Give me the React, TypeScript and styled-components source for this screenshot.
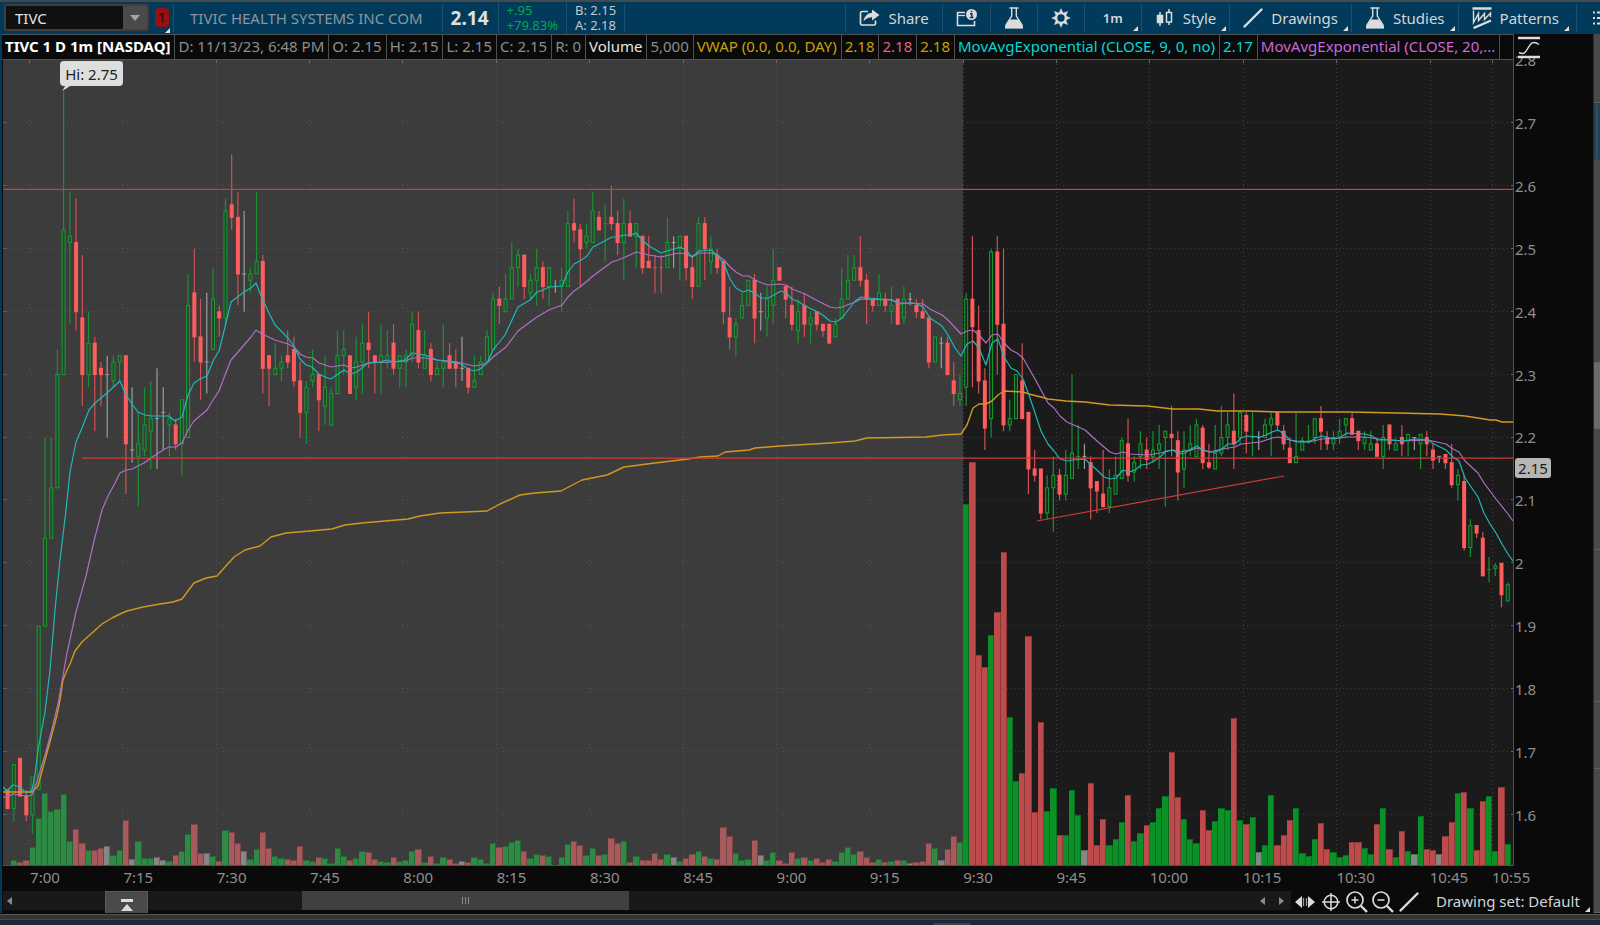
import React from 'react';
import styled, { createGlobalStyle, css } from 'styled-components';

/* ---------- palette ---------- */
const c = {
  toolbar: '#013a5b',
  toolbarLine: '#1f4f6d',
  ink: '#d3d6d8',
  black: '#0a0a0a',
  axisText: '#8e8e8e',
  edge: '#505050',
  cyan: '#1fb8b8',
  purple: '#b06fc4',
  gold: '#d0991f',
};

const GlobalStyle = createGlobalStyle`
  * { box-sizing: border-box; }
  html, body { margin: 0; padding: 0; background: #202634; }
  body { font-family: "Noto Sans", "Open Sans", sans-serif; font-size: 15px; color: ${c.ink}; }
  button, input { font: inherit; color: inherit; }
`;

/* ---------- market data ----------
   One candle per minute: kind(g up / r down / n unchanged), high, body top,
   body bottom, low (in cents), volume. Each row is a quarter of an hour. */
const SESSION: string[] = [
  // 6:56
  'r 164 164 161 161 0;g 168 168 161 159 5;r 169 169 163 163 3;r 164 163 160 159 5',
  // 7:00
  'g 166 166 160 157 18;g 190 190 164 164 47;g 220 204 190 190 72;g 220 212 204 204 54;g 234 230 212 212 56;g 275 253 230 230 71;g 259 252 251 238 24;r 258 251 240 237 36;r 249 239 230 225 22;g 240 235 230 228 15;r 236 235 230 221 15;r 232 231 230 225 17;n 233 230 230 220 19;g 233 232 229 228 10;g 233 233 232 229 15',
  // 7:15
  'r 233 233 219 211 45;n 228 218 218 216 6;g 224 219 217 209 24;g 228 222 218 217 7;g 229 223 221 215 7;n 231 223 223 215 8;n 228 224 224 218 5;g 224 223 222 217 4;r 223 222 219 218 10;g 226 226 219 214 14;g 246 241 220 220 31;r 250 243 236 232 41;r 242 236 232 226 12;n 243 232 232 227 12;g 247 242 234 234 9',
  // 7:30
  'r 241 240 239 236 4;g 258 256 239 238 35;r 265 257 255 253 33;r 259 255 246 241 22;n 256 246 246 240 14;g 247 246 245 243 6;g 259 248 246 246 16;r 249 248 231 227 33;r 233 233 231 225 17;g 235 231 230 230 9;g 233 232 231 229 7;r 237 233 232 231 6;r 236 234 229 228 5;r 232 229 224 220 19;g 229 228 224 219 5',
  // 7:45
  'g 234 230 229 228 4;r 230 230 226 221 8;g 233 228 225 222 7;g 228 227 222 222 2;g 237 233 227 227 17;g 237 234 233 230 9;r 233 233 227 227 5;g 236 232 228 226 7;g 238 235 232 227 14;r 240 235 234 231 13;r 233 233 232 227 6;g 238 233 232 227 4;g 237 233 232 231 3;r 238 235 231 230 8;g 233 233 231 228 4',
  // 8:00
  'g 234 233 232 228 5;g 240 238 233 232 14;r 240 237 232 231 16;g 237 233 231 231 3;r 235 234 230 229 9;g 232 231 230 230 2;g 238 232 231 228 8;r 235 233 231 231 6;r 234 232 231 228 2;n 236 231 231 229 4;r 231 231 228 227 3;g 233 229 228 228 8;g 233 232 230 230 6;g 237 236 232 232 2;g 243 242 234 234 22',
  // 8:15
  'r 244 242 241 238 18;g 246 242 240 240 19;g 251 247 242 242 23;g 250 249 247 244 25;r 249 249 244 242 14;g 246 245 243 242 7;g 250 247 245 241 11;r 248 247 244 242 10;g 247 247 244 241 9;n 245 244 244 243 0;g 247 245 244 240 8;g 256 254 244 244 21;r 258 254 253 251 24;r 254 253 250 244 20;g 254 252 251 250 10',
  // 8:30
  'g 259 256 251 251 17;r 256 255 253 253 10;g 257 254 254 248 11;r 260 255 254 253 27;r 256 254 251 249 22;g 258 254 251 245 24;r 256 254 252 252 3;g 254 254 252 247 9;r 252 252 247 246 5;r 252 248 247 247 5;r 249 247 247 243 12;r 249 247 247 243 6;g 255 251 247 247 11;n 252 251 251 247 8;g 252 252 250 245 4',
  // 8:45
  'r 252 252 247 245 7;r 249 247 244 242 11;g 255 254 244 244 14;r 255 254 250 245 9;g 252 250 248 246 7;r 250 249 247 246 6;r 248 248 240 238 38;r 244 239 236 234 29;g 239 238 236 233 12;g 243 241 239 239 5;g 245 245 241 241 6;r 246 245 239 235 25;n 243 240 240 237 10;g 244 242 239 236 5;g 250 245 241 238 13',
  // 9:00
  'r 247 247 245 245 5;r 244 244 242 239 2;r 244 241 238 237 13;g 242 240 237 235 7;r 243 241 238 236 8;g 240 239 238 235 5;r 240 240 238 237 7;r 238 238 237 236 3;r 238 238 235 235 6;g 239 238 236 236 4;g 247 242 239 239 13;g 249 245 242 242 18;g 249 247 245 245 11;r 252 247 245 244 14;r 246 245 242 238 8',
  // 9:15
  'r 242 242 241 240 3;g 246 243 241 241 6;r 243 242 241 240 3;g 244 241 240 238 4;r 242 242 238 238 5;g 244 242 239 238 5;n 243 242 242 241 2;r 242 241 240 239 3;r 242 240 239 239 4;r 239 239 232 231 22;g 236 236 232 232 17;n 236 235 235 231 5;r 236 235 230 230 16;r 232 229 227 225 29;g 230 227 226 225 23',
  // 9:30
  'g 243 242 228 225 361;r 252 242 237.6 228 403;r 241 237 229 227 210;r 231 229 221.5 218 198;g 250 249.5 223 220 230;r 252 249.5 238 230 253;r 250 238 222 221 313;g 226 223 222 221 148;g 230 230 223 223 84;r 235 229 223 223 92;r 224 224 215 211 229;r 218 215 214 213 53;r 215 215 208 207 143;g 214 212 208 207 54;g 217 214 212 205 77',
  // 9:45
  'r 215 214 211 210 30;g 218 214 211 210 30;g 230 217.5 213.5 213.5 75;g 222 217 217 215 50;n 219 217 217 215 15;r 217 216 212 207 82;r 213 213 211.5 208 20;r 218 211 209 209 46;g 215 212 209 208 20;g 217 214 211 211 26;g 220 219.5 213.5 213.5 43;r 223 219 214 213 70;g 217 216 214.5 213 24;g 221 219 217 215 32;r 220 218 216.5 215 40',
  // 10:00
  'g 221 218 217 216 43;g 222 219 218 215 57;g 221 221 220 209 69;r 225 220.5 220 217 113;r 221 219.5 214.5 210 68;g 221 218 215 212 46;g 222 219 218 217 26;g 223 222 217 217 22;r 222 221.5 216 215 55;r 219 216 215.3 215 35;g 222 217.5 215 215 44;g 225 220 217.5 217 57;g 224 222 220 218 55;r 227 221 219 215 147;g 224 224 220 219 45',
  // 10:15
  'r 224 223.5 221 217.5 41;g 224 220 220 217 48;n 221 220 220 218 13;g 223 222 220 220 20;g 224 223 222 217 70;r 224 224 222 221 20;r 222 221 219 218 30;r 220 218.3 216 216 45;g 224 217 216 216 57;g 220 219.5 218 218 12;g 222 219.5 219.5 219 9;g 223 223 220 219 26;r 225 223 221 218 42;r 221 220 219 218 16;g 221 220 219 218 13',
  // 10:30
  'g 223 221 220 219 8;g 223 223 222 220 10;r 224 223 220.5 220.5 23;r 221 221 219.5 218 23;g 221 220 219 218 17;g 221 219 218 218 11;r 220 219 217 217 41;g 222 220 217 215 57;r 222 222 219 218 16;g 220 219 218 218 8;r 222 220 219 217 34;g 220.5 220.5 219.5 217 14;n 220 220 220 218 11;g 220.5 220.5 219 215 49;r 221 220 219 217 16',
  // 10:45
  'r 219 218 216.4 215 15;n 217 217 217 216 11;r 217.3 217.3 216 215 29;r 219 216 212.5 212 43;g 215 214 212.5 210 72;r 214 213 202.5 202 73;g 207 206 202.5 201 57;r 206 206 204.8 204 15;r 205 204 198 198 64;g 201 199 199 197 69;g 200 199.6 199.2 198 14;r 200 200 195 193 78;g 197 196.6 194 194 21',
];

type Candle = { kind: string; high: number; top: number; bottom: number; low: number; volume: number; i: number };

const CANDLES: Candle[] = SESSION.join(';').split(';').map((row, n) => {
  const [kind, ...rest] = row.split(' ');
  const [high, top, bottom, low, volume] = rest.map(Number);
  return { kind, high, top, bottom, low, volume, i: n - 4 };
});

const EMA9 =
  '3,787 7,791 13,785 20,787 26,793 32,790 35,775 38,750 45,712 50,670 55,610 60,560 66,510 70,472 76,442 82,428 89,410 95,403 107,393 120,381 126,395 132,404 138,412 145,415 151,416 169,416 175,421 182,417 188,395 194,383 200,379 207,376 213,361 219,351 225,327 231,302 244,292 251,288 256,283 262,298 269,313 275,325 288,338 294,346 300,359 306,365 312,367 319,374 325,377 331,379 344,370 351,374 357,372 368,363 380,362 387,360 393,362 405,360 412,353 425,355 437,360 450,362 461,364 468,369 474,371 480,369 487,363 493,350 505,335 518,307 530,300 537,292 543,290 549,287 562,286 568,272 574,264 580,261 587,256 593,247 599,244 612,237 618,237 624,235 631,235 636,233 642,240 649,246 661,253 667,251 674,249 680,247 686,250 692,257 699,251 711,250 717,255 724,264 730,279 736,288 743,292 749,290 755,294 762,298 768,298 774,295 781,291 786,293 792,299 799,302 805,306 818,312 824,316 830,321 836,322 842,318 849,309 855,301 861,297 868,298 892,300 899,304 911,303 917,304 923,307 930,318 942,326 948,335 955,348 961,356 967,344 973,341 979,348 986,365 992,343 998,339 1004,357 1011,368 1017,371 1023,379 1029,395 1035,413 1041,431 1048,444 1054,451 1060,459 1067,461 1073,460 1085,459 1091,465 1097,470 1104,477 1110,479 1116,478 1123,470 1129,472 1135,470 1141,465 1148,464 1154,461 1160,457 1166,451 1173,450 1179,454 1185,453 1191,449 1197,446 1203,450 1210,452 1216,452 1222,449 1228,444 1235,444 1241,438 1247,436 1260,437 1266,435 1272,432 1278,430 1284,434 1290,440 1297,442 1309,442 1316,438 1322,436 1334,439 1341,437 1347,433 1365,434 1372,436 1378,440 1391,440 1403,441 1415,439 1428,440 1434,444 1446,450 1453,457 1459,461 1465,478 1478,497 1484,513 1490,524 1496,533 1502,544 1508,554 1513,561';

const EMA20 =
  '3,797 7,797 13,794 26,796 32,795 38,778 45,755 51,733 58,704 67,653 76,612 86,576 94,541 102,510 108,496 114,485 120,473 126,470 132,469 144,463 151,458 163,450 169,447 176,447 182,443 188,430 194,421 207,410 213,400 219,391 225,375 231,360 238,352 251,337 256,330 262,334 275,340 288,344 294,347 300,354 306,357 313,358 319,363 331,367 344,365 351,368 357,367 368,363 393,362 406,361 412,358 425,358 437,360 450,361 461,363 474,366 480,365 487,363 493,357 506,347 518,331 530,322 537,317 549,310 562,305 568,297 574,291 580,287 593,276 605,267 612,262 618,260 630,255 636,252 649,255 661,257 674,254 680,253 686,254 692,257 699,253 711,253 717,255 724,260 730,267 736,272 743,276 749,276 755,280 762,283 768,285 780,284 786,285 792,289 805,294 818,301 824,304 830,307 836,308 842,307 855,302 861,299 892,300 899,303 911,303 923,304 930,309 942,315 948,320 961,334 967,331 973,330 979,335 986,343 992,335 998,334 1004,343 1011,350 1017,353 1023,358 1035,379 1048,403 1054,408 1060,416 1067,422 1085,430 1097,441 1110,452 1116,454 1123,452 1129,454 1148,455 1160,453 1173,450 1179,452 1191,450 1197,448 1210,452 1222,449 1235,447 1241,444 1260,442 1272,438 1278,437 1290,440 1297,441 1309,442 1322,439 1341,438 1347,437 1365,437 1378,439 1403,441 1428,440 1446,444 1453,449 1459,452 1465,461 1478,473 1484,483 1496,499 1508,514 1513,521';

const VWAP =
  '3,792 32,792 38,786 45,760 51,738 57,715 60,700 63,680 67,670 70,664 75,651 82,642 92,633 102,624 112,618 120,614 127,611 143,607 160,604 173,602 182,599 188,591 194,583 206,578 217,576 225,567 234,557 245,550 260,546 271,537 286,533 310,531 332,529 345,525 362,523 385,521 408,519 420,516 440,513 465,512 487,511 500,504 520,495 535,493 561,491 582,480 607,475 624,467 655,463 688,459 700,457 718,456 725,452 737,451 749,450 755,448 780,446 830,443 855,441 867,438 926,437 942,435 961,434 967,425 973,408 979,404 986,404 992,401 998,395 1004,391 1023,392 1029,394 1041,397 1048,399 1066,401 1085,402 1110,405 1147,406 1173,409 1199,409 1217,411 1247,411 1280,412 1350,412 1397,413 1440,414 1453,415 1465,416 1478,418 1490,420 1496,420 1502,422 1513,422';

const TIMES = ['7:00', '7:15', '7:30', '7:45', '8:00', '8:15', '8:30', '8:45', '9:00', '9:15', '9:30', '9:45', '10:00', '10:15', '10:30', '10:45', '10:55'];
const PRICES = ['2.8', '2.7', '2.6', '2.5', '2.4', '2.3', '2.2', '2.1', '2', '1.9', '1.8', '1.7', '1.6'];

/* ---------- chart scales ---------- */
const LEFT = 3;
const RIGHT = 1514;
const TOP = 60;
const BASE = 865;
const OPEN_X = 963;
const STEP = 6.2245;
const yOf = (cents: number) => 123 + (270 - cents) * 6.29;
const xOf = (i: number) => 29.5 + i * STEP;

/* ---------- frame ---------- */
const Shell = styled.div`
  display: flex;
  flex-direction: column;
  min-height: 100vh;
  min-width: 1180px;
  background: ${c.black};
  overflow: hidden;
`;

const TopEdge = styled.div`
  height: 2px;
  background: #44494c;
`;

const Toolbar = styled.header`
  display: flex;
  height: 32px;
  padding-left: 4px;
  background: ${c.toolbar};
  overflow: hidden;
`;

const cell = css`
  display: flex;
  align-items: center;
  border-left: 1px solid ${c.toolbarLine};
  margin: 2px 0;
`;

const SymbolBox = styled.div`
  display: flex;
  flex: none;
  width: 145px;
  height: 27px;
  margin: 2px 6px 0 0;
  background: #101010;
  border: 2px solid #3e3e3e;
  border-radius: 3px;
`;

const SymbolInput = styled.input`
  flex: 1;
  min-width: 0;
  padding: 0 0 0 9px;
  border: 0;
  background: transparent;
  font-size: 15px;
  color: #e4e4e4;
  outline: none;
`;

const SymbolArrow = styled.button`
  display: grid;
  place-items: center;
  width: 24px;
  padding: 0;
  border: 0;
  background: #4a4a4a;
`;

const LinkBadge = styled.button`
  position: relative;
  flex: none;
  width: 18px;
  margin: 0;
  padding: 0 4px 2px 0;
  border: 0;
  background: none;
  color: #3a0505;
  font-size: 15px;
  b {
    display: block;
    height: 19px;
    border-radius: 4px;
    background: #98100f;
    font-weight: 400;
    line-height: 19px;
    text-align: center;
  }
`;

const Company = styled.div`
  ${cell}
  padding: 0 19px 0 16px;
  color: #8b969e;
  white-space: nowrap;
`;

const Last = styled.div`
  ${cell}
  padding: 0 9px 0 8px;
  font-size: 19px;
  font-weight: 700;
  color: #e0e0e0;
`;

const Pair = styled.div<{ $tone: string }>`
  ${cell}
  flex-direction: column;
  align-items: flex-start;
  justify-content: center;
  margin: 0;
  padding: 0 8px;
  font-size: 13px;
  line-height: 15px;
  color: ${(p) => p.$tone};
  white-space: nowrap;
`;

const Spacer = styled.div`
  ${cell}
  flex: 1;
`;

const ToolButton = styled.button`
  ${cell}
  position: relative;
  gap: 8px;
  padding: 0 13px;
  border-width: 0 0 0 1px;
  background: none;
  color: ${c.ink};
  white-space: nowrap;
  svg { flex: none; }
`;

const IntervalButton = styled(ToolButton)`
  padding: 0 18px;
  font-size: 13px;
  font-weight: 600;
`;

const MoreButton = styled(ToolButton)`
  width: 24px;
  margin-left: 4px;
  padding: 0 0 0 15px;
`;

const Corner = styled.span`
  position: absolute;
  right: 3px;
  bottom: 1px;
  border-left: 5px solid transparent;
  border-bottom: 5px solid #dedede;
`;

const Body = styled.div`
  display: flex;
  flex: 1;
`;

const ChartPane = styled.main`
  display: grid;
  flex: 1;
  min-width: 0;
  grid-template-columns: minmax(0, 1fr) 79px;
  grid-template-rows: 26px minmax(400px, 1fr) 25px 22px;
  border-left: 2px solid ${c.toolbar};
`;

const Legend = styled.div`
  display: flex;
  min-width: 0;
  border: solid ${c.edge};
  border-width: 1px 1px 1px 0;
  overflow: hidden;
`;

const LegendCell = styled.span<{ $tone?: string; $bold?: boolean; $shrink?: boolean }>`
  flex: ${(p) => (p.$shrink ? '0 1 auto' : 'none')};
  min-width: 0;
  padding: 0 4px 0 3px;
  border-right: 1px solid ${c.edge};
  color: ${(p) => p.$tone || '#8e8e8e'};
  font-weight: ${(p) => (p.$bold ? 700 : 400)};
  line-height: 22px;
  white-space: nowrap;
  overflow: hidden;
  text-overflow: ellipsis;
`;

const ScaleButton = styled.button`
  z-index: 1;
  padding: 2px 0 0 4px;
  border: 0;
  background: none;
  text-align: left;
  svg { display: block; }
`;

const Plot = styled.section`
  position: relative;
  margin-left: 1px;
  > svg { position: absolute; inset: 0; width: 100%; height: 100%; display: block; }
`;

const HighTag = styled.div`
  position: absolute;
  left: 57px;
  top: 1px;
  width: 63px;
  height: 25px;
  border-radius: 4px;
  background: #dedede;
  color: #222;
  line-height: 26px;
  text-align: center;
  &::after {
    content: '';
    position: absolute;
    left: 4px;
    top: 24px;
    border-left: 6px solid #dedede;
    border-bottom: 6px solid transparent;
    transform: skewX(-30deg);
  }
`;

const PriceAxis = styled.ol`
  position: relative;
  display: grid;
  grid-template-rows: repeat(12, minmax(0, 629fr)) minmax(0, 510fr);
  margin: 0;
  padding: 0 0 0 1px;
  list-style: none;
  color: ${c.axisText};
`;

const PriceLabel = styled.li`
  height: 20px;
  margin-top: -9px;
  line-height: 19px;
`;

const PriceTag = styled.li`
  position: absolute;
  left: 1px;
  top: 49.4%;
  width: 36px;
  height: 20px;
  border-radius: 3px;
  background: #b6b6b6;
  color: #1c1c1c;
  line-height: 20px;
  text-align: center;
`;

const TimeAxis = styled.ol`
  display: grid;
  grid-template-columns: 27fr repeat(15, 93fr) 62fr 22fr;
  margin: 0 0 0 1px;
  padding: 0;
  list-style: none;
  color: ${c.axisText};
`;

const TimeLabel = styled.li`
  width: 0;
  line-height: 22px;
  white-space: nowrap;
  &:first-child { grid-column: 2; }
`;

const Footer = styled.div`
  grid-column: 1 / 3;
  display: flex;
  padding-left: 1px;
`;

const ScrollTrack = styled.div`
  display: flex;
  flex: 1;
  height: 19px;
  background: #191919;
`;

const ScrollButton = styled.button`
  display: grid;
  place-items: center;
  width: 19px;
  padding: 0;
  border: 0;
  background: none;
`;

const StartButton = styled(ScrollButton)`
  width: 12px;
`;

const Gap = styled.div<{ $grow: number }>`
  flex: ${(p) => p.$grow} 1 0;
`;

const DrawerTab = styled.button`
  display: grid;
  place-items: center;
  width: 43px;
  height: 23px;
  padding: 5px 0 0;
  border: 1px solid #5a5a5a;
  border-bottom: 0;
  background: #4a4a4a;
`;

const Thumb = styled.div`
  display: flex;
  flex: 327 1 0;
  align-items: center;
  justify-content: center;
  gap: 2px;
  background: #404040;
  i { width: 1px; height: 7px; background: #8a8a8a; }
`;

const Tools = styled.div`
  display: flex;
  align-items: center;
  gap: 4px;
  height: 22px;
  padding-left: 3px;
`;

const IconButton = styled.button`
  display: grid;
  width: 22px;
  height: 22px;
  padding: 0;
  border: 0;
  place-items: center;
  background: none;
`;

const DrawingSet = styled.button`
  position: relative;
  width: 157px;
  height: 22px;
  margin-left: 12px;
  padding: 0 0 2px;
  border: 0;
  background: none;
  color: ${c.ink};
  line-height: 18px;
  text-align: left;
  white-space: nowrap;
`;

const SideRail = styled.aside`
  display: flex;
  flex-direction: column;
  flex: none;
  width: 7px;
  background: #4a4a4a;
  border-left: 1px solid #2c2c2c;
`;

const RailPart = styled.div<{ $size: number; $tone?: 'light' | 'active' }>`
  flex: ${(p) => p.$size} 1 0;
  border: ${(p) => (p.$tone === 'active' ? '2px solid #1c435f' : '0 solid #606060')};
  border-bottom-width: 1px;
  background: ${(p) => (p.$tone === 'light' ? '#6b6b6b' : '#4a4a4a')};
`;

const Splitter = styled.div`
  height: 7px;
  background: #343434;
  border-top: 1px solid #0c0c0c;
  border-bottom: 1px solid #4b4b4b;
  box-shadow: inset 0 1px 0 #555;
`;

const Dock = styled.div`
  display: flex;
  height: 5px;
  padding-top: 3px;
  background: #202634;
  &::before { content: ''; flex: 933 1 0; }
  &::after { content: ''; flex: 629 1 0; }
  i { flex: 38 1 0; background: #3c414c; border-radius: 3px 3px 0 0; }
`;

/* ---------- icons ---------- */
const W = '#dcdcdc';

const ShareIcon = () => (
  <svg width="21" height="20" viewBox="0 0 21 20" fill="none">
    <path d="M9 3.500H3Q1.500 3.500 1.500 5V15.500Q1.500 17 3 17H15Q16.500 17 16.500 15.500V12.500" stroke={W} strokeWidth="1.700" />
    <path d="M13 1.500 20.500 7 13 12.500V9.300C9.500 9.300 7 10.500 4.500 13.500 5 8.500 8.500 5 13 4.700z" fill={W} />
  </svg>
);
const InfoIcon = () => (
  <svg width="21" height="20" viewBox="0 0 21 20" fill="none">
    <path d="M9 4.500H1.500V17.500H18.500V13" stroke={W} strokeWidth="1.600" />
    <path d="M1.500 7.500H9" stroke={W} strokeWidth="1.300" />
    <circle cx="15.500" cy="6.500" r="5.500" fill={W} />
    <path d="M14 5.800h1.800v3.500M13.800 9.600h3.600M15.600 2.700v1.600" stroke={c.toolbar} strokeWidth="1.500" />
  </svg>
);
const FlaskIcon = () => (
  <svg width="20" height="24" viewBox="0 0 20 24" fill="none">
    <path d="M5.500 2h9M7.700 2v8L2 19v2.500h16V19l-5.700-9V2" stroke={W} strokeWidth="1.400" />
    <path d="M6 13.500h8L19 20.500V22.500H1V20.500z" fill={W} />
  </svg>
);
const GearIcon = () => (
  <svg width="20" height="20" viewBox="0 0 20 20" fill="none" stroke={W}>
    <circle cx="10" cy="10" r="4.800" strokeWidth="2.300" />
    {[0, 45, 90, 135, 180, 225, 270, 315].map((a) => (
      <path key={a} d="M8.300 4.800 10 .8l1.700 4z" fill={W} strokeWidth=".6" transform={`rotate(${a} 10 10)`} />
    ))}
  </svg>
);
const StyleIcon = () => (
  <svg width="20" height="20" viewBox="0 0 20 20" fill="none" stroke={W} strokeWidth="1.500">
    <path d="M5 4v14M14 1v3M14 14v3" />
    <rect x="2.500" y="7.500" width="5" height="7" fill={W} />
    <rect x="11.500" y="4.500" width="5" height="9.500" />
  </svg>
);
const LineIcon = () => (
  <svg width="20" height="20" viewBox="0 0 20 20" fill="none">
    <path d="M1.500 18.500 18.500 1.500" stroke={W} strokeWidth="2.400" strokeLinecap="round" />
  </svg>
);
const PatternIcon = () => (
  <svg width="20" height="22" viewBox="0 0 20 22" fill="none" stroke={W}>
    <path d="M.5 1.500h19M1.500 21l17.500-7.500" strokeWidth="2.400" />
    <path d="M1.500 3.500V15.500L6.500 6.500v7l6-7v6l6-6.500v4" strokeWidth="1.400" />
  </svg>
);
const ListIcon = () => (
  <svg width="18" height="16" viewBox="0 0 18 16" stroke={W} strokeWidth="2">
    <path d="M1 2.500h2M5 2.500h13M1 8h2M5 8h13M1 13.500h2M5 13.500h13" />
  </svg>
);
const ScaleIcon = () => (
  <svg width="22" height="24" viewBox="0 0 22 24" fill="none" stroke={W}>
    <path d="M0 2h22M0 21h22" strokeWidth="2.600" />
    <path d="M1 16.500c5 2.500 6.500 0 9-4.500s5-8 11-3.500" strokeWidth="1.500" />
  </svg>
);
const Triangle = ({ d, fill = '#8a8a8a', w = 8, h = 8 }: { d: string; fill?: string; w?: number; h?: number }) => (
  <svg width={w} height={h} viewBox={`0 0 ${w} ${h}`}><path d={d} fill={fill} /></svg>
);
const PanIcon = () => (
  <svg width="20" height="14" viewBox="0 0 20 14">
    <path d="M0 7 7 1v12zM20 7l-7-6v12z" fill={W} />
    <path d="M8.500 3v8M11.500 3v8" stroke="#9a9a9a" strokeWidth="1.300" />
  </svg>
);
const CrosshairIcon = () => (
  <svg width="18" height="18" viewBox="0 0 18 18" fill="none" stroke={W} strokeWidth="1.500">
    <circle cx="9" cy="9" r="6.800" />
    <path d="M9 0v18M0 9h18" />
  </svg>
);
const LensIcon = ({ plus }: { plus?: boolean }) => (
  <svg width="22" height="22" viewBox="0 0 22 22" fill="none" stroke={W}>
    <circle cx="9" cy="9" r="8" strokeWidth="1.700" />
    <path d={plus ? 'M5.500 9h7M9 5.500v7' : 'M5.500 9h7'} strokeWidth="1.500" />
    <path d="M15 15l6 6" strokeWidth="2.400" />
  </svg>
);

/* ---------- chart drawing ---------- */
const wick: Record<string, string> = { g: '#17922f', r: '#cf5151', n: '#9c9c9c' };

const Grid = () => (
  <g strokeWidth="1" shapeRendering="crispEdges">
    {PRICES.slice(1).map((p, n) => {
      const y = Math.round(123 + n * 62.9) - 0.5;
      return (
        <g key={p}>
          <path d={`M${LEFT} ${y}H${OPEN_X}`} stroke="#505050" strokeDasharray="1 3" />
          <path d={`M${OPEN_X} ${y}H${RIGHT}`} stroke="#3a3a3a" strokeDasharray="1 3" />
          <path d={`M${LEFT} ${y}h3M${RIGHT - 3} ${y}h3`} stroke="#646464" />
        </g>
      );
    })}
    {TIMES.map((t, n) => {
      const x = Math.floor(xOf(n === 16 ? 235 : n * 15)) + 0.5;
      return (
        <g key={t}>
          <path d={`M${x} ${TOP}V${BASE}`} stroke={x < OPEN_X ? '#525252' : '#404040'} strokeDasharray="1 3" />
          <path d={`M${x} ${TOP}v3`} stroke="#6c6c6c" />
        </g>
      );
    })}
  </g>
);

const VolumeBars = () => (
  <g shapeRendering="crispEdges">
    {CANDLES.filter((k) => k.volume > 0).map((k) => {
      const pre = k.i < 150;
      const fill = k.kind === 'g' ? (pre ? '#2f8a45' : '#0a9128') : k.kind === 'r' ? (pre ? '#a75a5b' : '#bd4b4b') : '#868686';
      const x = Math.round(xOf(k.i));
      const w = Math.round(xOf(k.i + 1)) - x;
      return (
        <g key={k.i}>
          <rect x={x} y={BASE - k.volume} width={w} height={k.volume} fill={fill} />
          <path d={`M${x} ${BASE - k.volume + 0.5}h${w}M${x + w - 0.5} ${BASE - k.volume}V${BASE}`} stroke="#000" strokeOpacity=".25" />
        </g>
      );
    })}
  </g>
);

const CandleSticks = () => (
  <g>
    {CANDLES.map((k) => {
      const x = xOf(k.i) + 3;
      const top = yOf(k.top);
      const bottom = yOf(k.bottom);
      const flat = k.top === k.bottom;
      return (
        <g key={k.i}>
          <path d={`M${x} ${yOf(k.high)}V${top}M${x} ${bottom}V${yOf(k.low)}`} stroke={wick[k.kind]} strokeWidth="1.200" />
          {flat && <path d={`M${x - 2} ${top}h4`} stroke={wick[k.kind]} />}
          {!flat && k.kind === 'r' && <rect x={x - 2} y={top - 0.5} width="4" height={bottom - top + 1} fill="#ff5d5d" />}
          {!flat && k.kind === 'g' && (
            <rect x={x - 1.5} y={top} width="3" height={bottom - top} fill="#14501f" fillOpacity=".35" stroke="#12a02e" />
          )}
        </g>
      );
    })}
  </g>
);

const Chart = () => (
  <svg viewBox={`${LEFT} ${TOP} ${RIGHT - LEFT} 806`} preserveAspectRatio="none" role="img" aria-label="TIVC one minute chart">
    <rect x={LEFT} y={TOP} width={OPEN_X - LEFT} height="806" fill="#3c3c3c" />
    <rect x={OPEN_X} y={TOP} width={RIGHT - OPEN_X} height="806" fill="#1b1b1b" />
    <Grid />
    <VolumeBars />
    <CandleSticks />
    <g fill="none" strokeWidth="1.200" strokeLinejoin="round">
      <polyline points={VWAP} stroke={c.gold} strokeWidth="1.400" />
      <polyline points={EMA20} stroke={c.purple} />
      <polyline points={EMA9} stroke={c.cyan} />
      <path d="M3 189.300H1514M82 458.200H1514" stroke="#cf3c3c" strokeWidth="1.200" />
      <path d="M1037 521 1284 476" stroke="#c93b3b" />
    </g>
    <path d={`M${RIGHT - 0.5} ${TOP}V865.500H${LEFT}`} fill="none" stroke={c.edge} />
  </svg>
);

const LEGEND: { text: string; tone?: string; bold?: boolean; shrink?: boolean }[] = [
  { text: 'TIVC 1 D 1m [NASDAQ]', tone: '#ffffff', bold: true },
  { text: 'D: 11/13/23, 6:48 PM' },
  { text: 'O: 2.15' },
  { text: 'H: 2.15' },
  { text: 'L: 2.15' },
  { text: 'C: 2.15' },
  { text: 'R: 0' },
  { text: 'Volume', tone: '#e6e6e6' },
  { text: '5,000' },
  { text: 'VWAP (0.0, 0.0, DAY)', tone: '#c9a000' },
  { text: '2.18', tone: '#c9a000' },
  { text: '2.18', tone: '#e0607f' },
  { text: '2.18', tone: '#c9a000' },
  { text: 'MovAvgExponential (CLOSE, 9, 0, no)', tone: '#00d9d9' },
  { text: '2.17', tone: '#00d9d9' },
  { text: 'MovAvgExponential (CLOSE, 20,...', tone: '#cc66dd', shrink: true },
];

export default function App() {
  return (
    <Shell>
      <GlobalStyle />
      <TopEdge />
      <Toolbar>
        <SymbolBox>
          <SymbolInput aria-label="Symbol" defaultValue="TIVC" />
          <SymbolArrow aria-label="Recent symbols"><Triangle w={12} h={8} d="M1 1h10L6 7z" fill="#a5a5a5" /></SymbolArrow>
        </SymbolBox>
        <LinkBadge aria-label="Link group 1"><b>1</b><Corner /></LinkBadge>
        <Company>TIVIC HEALTH SYSTEMS INC COM</Company>
        <Last>2.14</Last>
        <Pair $tone="#05a84c"><span>+.95</span><span>+79.83%</span></Pair>
        <Pair $tone="#c3c9cd"><span>B: 2.15</span><span>A: 2.18</span></Pair>
        <Spacer />
        <ToolButton><ShareIcon />Share</ToolButton>
        <ToolButton aria-label="Info"><InfoIcon /></ToolButton>
        <ToolButton aria-label="Lab"><FlaskIcon /></ToolButton>
        <ToolButton aria-label="Settings"><GearIcon /></ToolButton>
        <IntervalButton>1m<Corner /></IntervalButton>
        <ToolButton><StyleIcon />Style<Corner /></ToolButton>
        <ToolButton><LineIcon />Drawings<Corner /></ToolButton>
        <ToolButton><FlaskIcon />Studies<Corner /></ToolButton>
        <ToolButton><PatternIcon />Patterns<Corner /></ToolButton>
        <MoreButton aria-label="More"><ListIcon /></MoreButton>
      </Toolbar>

      <Body>
        <ChartPane>
          <Legend>
            {LEGEND.map((l, n) => (
              <LegendCell key={n} $tone={l.tone} $bold={l.bold} $shrink={l.shrink}>{l.text}</LegendCell>
            ))}
          </Legend>
          <ScaleButton aria-label="Auto scale"><ScaleIcon /></ScaleButton>

          <Plot>
            <Chart />
            <HighTag>Hi: 2.75</HighTag>
          </Plot>
          <PriceAxis>
            {PRICES.map((p) => <PriceLabel key={p}>{p}</PriceLabel>)}
            <PriceTag>2.15</PriceTag>
          </PriceAxis>

          <TimeAxis>
            {TIMES.map((t) => <TimeLabel key={t}>{t}</TimeLabel>)}
          </TimeAxis>
          <div />

          <Footer>
            <ScrollTrack>
              <StartButton aria-label="Scroll left"><Triangle w={5} h={8} d="M5 0v8L0 4z" /></StartButton>
              <Gap $grow={90} />
              <DrawerTab aria-label="Open drawer"><Triangle w={12} h={13} d="M0 0h12v3H0zM6 5l6 7H0z" fill={W} /></DrawerTab>
              <Gap $grow={154} />
              <Thumb><i /><i /><i /></Thumb>
              <Gap $grow={623} />
              <ScrollButton aria-label="Back"><Triangle w={5} h={8} d="M5 0v8L0 4z" /></ScrollButton>
              <ScrollButton aria-label="Forward"><Triangle w={5} h={8} d="M0 0v8l5-4z" /></ScrollButton>
            </ScrollTrack>
            <Tools>
              <IconButton aria-label="Pan"><PanIcon /></IconButton>
              <IconButton aria-label="Crosshair"><CrosshairIcon /></IconButton>
              <IconButton aria-label="Zoom in"><LensIcon plus /></IconButton>
              <IconButton aria-label="Zoom out"><LensIcon /></IconButton>
              <IconButton aria-label="Draw line"><LineIcon /></IconButton>
              <DrawingSet>Drawing set: Default<Corner /></DrawingSet>
            </Tools>
          </Footer>
        </ChartPane>

        <SideRail>
          <RailPart $size={69} />
          <RailPart $size={54} $tone="active" />
          <RailPart $size={205} />
          <RailPart $size={65} $tone="light" />
          <RailPart $size={122} />
          <RailPart $size={153} />
          <RailPart $size={66} />
          <RailPart $size={145} />
        </SideRail>
      </Body>
      <Splitter />
      <Dock><i /></Dock>
    </Shell>
  );
}
